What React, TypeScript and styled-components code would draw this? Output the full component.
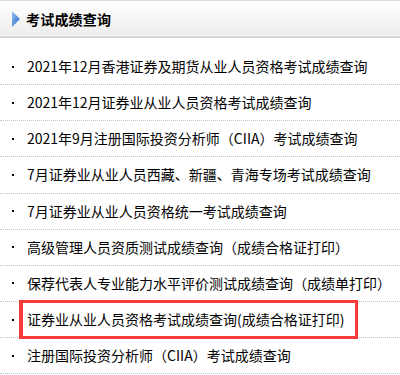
import React from "react";
import styled, { createGlobalStyle, css } from "styled-components";

interface Item {
  title: string;
  marked?: boolean;
}

const items: Item[] = [
  { title: "2021年12月香港证券及期货从业人员资格考试成绩查询" },
  { title: "2021年12月证券业从业人员资格考试成绩查询" },
  { title: "2021年9月注册国际投资分析师（CIIA）考试成绩查询" },
  { title: "7月证券业从业人员西藏、新疆、青海专场考试成绩查询" },
  { title: "7月证券业从业人员资格统一考试成绩查询" },
  { title: "高级管理人员资质测试成绩查询（成绩合格证打印）" },
  { title: "保荐代表人专业能力水平评价测试成绩查询（成绩单打印）" },
  { title: "证券业从业人员资格考试成绩查询(成绩合格证打印)", marked: true },
  { title: "注册国际投资分析师（CIIA）考试成绩查询" },
];

const App: React.FC = () => {
  return (
    <>
      <GlobalStyle />
      <Panel>
        <Header>
          <svg width="8" height="16" viewBox="0 0 8 16">
            <defs>
              <linearGradient id="tri" x1="0" y1="0" x2="1" y2="1">
                <stop offset="0" stopColor="#9cc4f4" />
                <stop offset="1" stopColor="#2567cc" />
              </linearGradient>
            </defs>
            <polygon points="0,0 8,8 0,16" fill="url(#tri)" />
          </svg>
          <Title>考试成绩查询</Title>
        </Header>
        <List>
          {items.map((item) => (
            <Row key={item.title} marked={item.marked}>
              <Bullet />
              <Link href="#">{item.title}</Link>
            </Row>
          ))}
        </List>
      </Panel>
    </>
  );
};

const GlobalStyle = createGlobalStyle`
  body {
    margin: 0;
    background: #ffffff;
    font-family: "Noto Sans CJK SC", "Liberation Sans", sans-serif;
  }
`;

const Panel = styled.div`
  width: 400px;
  background: #ffffff;
`;

const Header = styled.div`
  display: flex;
  align-items: center;
  gap: 6px;
  height: 35px;
  padding-left: 12px;
  border-top: 1px solid #d9d9d9;
  border-bottom: 2px solid #d5d5d5;
  background: linear-gradient(#ffffff, #ededed);
  box-shadow: inset 0 -1px 0 #f7f7f7;
`;

const Title = styled.span`
  font-size: 14px;
  font-weight: 700;
  color: #000000;
  letter-spacing: 0.2px;
`;

const List = styled.ul`
  list-style: none;
  margin: 0;
  padding: 11px 0 0;
`;

const Row = styled.li<{ marked?: boolean }>`
  position: relative;
  display: flex;
  align-items: center;
  gap: 13px;
  height: 36.15px;
  box-sizing: border-box;
  padding-left: 12px;
  border-bottom: 1px dotted #c4c4c4;

  ${({ marked }) =>
    marked &&
    css`
      &::after {
        content: "";
        position: absolute;
        top: -2px;
        bottom: -2px;
        left: 19px;
        width: 339px;
        box-sizing: border-box;
        border: 3px solid #f53a3a;
        border-left-width: 4px;
      }
    `};
`;

const Bullet = styled.span`
  width: 2px;
  height: 2px;
  background: #000000;
  flex-shrink: 0;
`;

const Link = styled.a`
  font-family: "Liberation Sans Narrow", "Noto Sans CJK SC", sans-serif;
  font-size: 14px;
  line-height: 35px;
  color: #000000;
  text-decoration: none;
  white-space: nowrap;
`;

export default App;
